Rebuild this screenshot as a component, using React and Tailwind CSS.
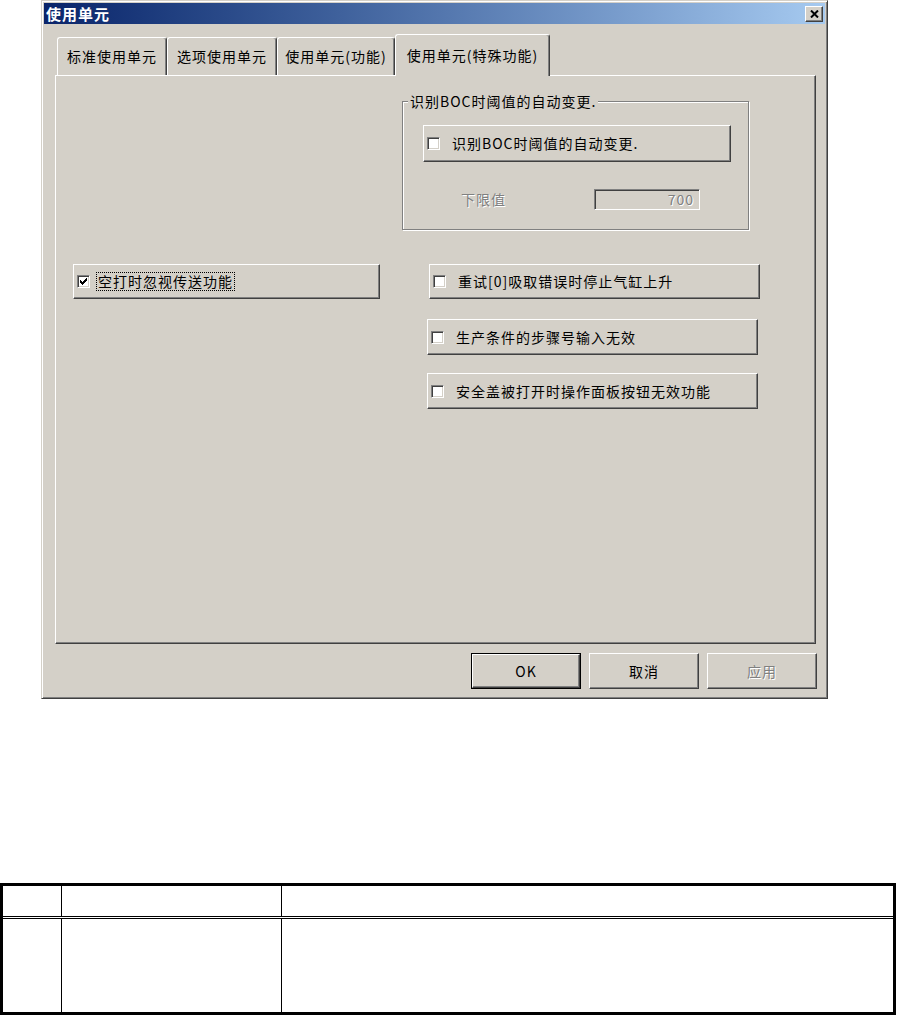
import React from "react";

const raised =
  "border border-t-white border-l-white border-r-[#404040] border-b-[#404040] shadow-[inset_-1px_-1px_0_#808080]";
const sunken =
  "border border-t-[#808080] border-l-[#808080] border-r-white border-b-white shadow-[inset_1px_1px_0_#404040,inset_-1px_-1px_0_#d4d0c8]";
const etched = "border border-[#808080] shadow-[inset_1px_1px_0_#fff,1px_1px_0_#fff]";
const disabledText = "text-[#808080] [text-shadow:1px_1px_0_#fff]";

function Check({ checked }) {
  return (
    <span className={`w-[13px] h-[13px] shrink-0 bg-white flex items-center justify-center ${sunken}`}>
      {checked && (
        <svg width="7" height="7" viewBox="0 0 7 7" shapeRendering="crispEdges">
          <path d="M6 0h1v3h-1v1h-1v1h-1v1h-1v1h-1v-1h-1v-1h-1v-3h1v1h1v1h1v-1h1v-1h1v-1h1z" fill="#000" />
        </svg>
      )}
    </span>
  );
}

function CheckButton({ label, checked, focus, gap = "ml-[12px]", className = "" }) {
  return (
    <div className={`flex items-center pl-[3px] bg-[#d4d0c8] ${raised} ${className}`}>
      <Check checked={checked} />
      <span
        className={`${gap} leading-[17px] whitespace-nowrap ${
          focus ? "outline outline-1 outline-dotted outline-black px-[1px] -ml-[1px]" : ""
        }`}
      >
        {label}
      </span>
    </div>
  );
}

function Tab({ label, selected, className = "" }) {
  return (
    <div
      className={`flex items-center justify-center bg-[#d4d0c8] rounded-t-[3px] border-t border-l border-r border-t-white border-l-white border-r-[#404040] shadow-[inset_-1px_0_0_#808080] ${
        selected ? "h-[42px] -mb-[1px] relative z-10" : "h-[38px]"
      } ${className}`}
    >
      {label}
    </div>
  );
}

function DlgButton({ label, primary, disabled }) {
  const inner = (
    <div className={`w-full h-full flex items-center justify-center ${raised} ${disabled ? disabledText : ""}`}>
      {label}
    </div>
  );
  if (primary) {
    return <div className="w-[110px] h-[36px] border border-black">{inner}</div>;
  }
  return <div className="w-[110px] h-[36px]">{inner}</div>;
}

export default function App() {
  return (
    <div
      className="min-h-screen bg-white text-black text-[14px] tracking-[1px]"
      style={{ fontFamily: '"Noto Sans CJK SC", "Liberation Sans", sans-serif' }}
    >
      {/* dialog window */}
      <div className="ml-[41px] w-[787px] h-[699px] bg-[#d4d0c8] p-[2px] flex flex-col border border-t-[#d4d0c8] border-l-[#d4d0c8] border-r-[#404040] border-b-[#404040] shadow-[inset_1px_1px_0_#fff,inset_-1px_-1px_0_#808080]">
        <div className="h-[21px] shrink-0 flex items-center justify-between pl-[2px] pr-[2px] bg-gradient-to-r from-[#0a246a] to-[#a6caf0]">
          <span className="text-white font-bold text-[15px] tracking-[1px] leading-[21px]">使用单元</span>
          <div className={`w-[18px] h-[16px] flex items-center justify-center bg-[#d4d0c8] ${raised}`}>
            <svg width="9" height="8" viewBox="0 0 9 8">
              <path d="M1 0.5L8 7.5M8 0.5L1 7.5" stroke="#000" strokeWidth="2" />
            </svg>
          </div>
        </div>

        {/* tabs */}
        <div className="h-[51px] shrink-0 flex items-end pl-[13px]">
          <Tab label="标准使用单元" className="w-[110px]" />
          <Tab label="选项使用单元" className="w-[110px]" />
          <Tab label="使用单元(功能)" className="w-[118px]" />
          <Tab label="使用单元(特殊功能)" selected className="w-[155px]" />
        </div>

        {/* tab panel */}
        <div className="ml-[11px] mr-[9px] h-[569px] shrink-0 flex flex-col border border-t-white border-l-white border-r-[#404040] border-b-[#404040] shadow-[inset_-1px_-1px_0_#808080]">
          <div className={`relative ml-[346px] mt-[25px] w-[347px] h-[129px] ${etched}`}>
            <span className="absolute -top-[10px] left-[5px] px-[2px] bg-[#d4d0c8] leading-[18px]">
              识别BOC时阈值的自动变更.
            </span>
            <CheckButton label="识别BOC时阈值的自动变更." className="mt-[23px] ml-[20px] w-[308px] h-[37px]" />
            <div className="flex items-center mt-[27px] h-[21px]">
              <span className={`ml-[58px] ${disabledText}`}>下限值</span>
              <div className={`ml-auto mr-[48px] w-[106px] h-[21px] flex items-center justify-end pr-[5px] ${sunken} ${disabledText}`}>
                700
              </div>
            </div>
          </div>

          <div className="flex mt-[34px]">
            <CheckButton label="空打时忽视传送功能" checked focus gap="ml-[7px]" className="ml-[17px] w-[307px] h-[35px]" />
            <CheckButton label=" 重试[0]吸取错误时停止气缸上升" className="ml-[49px] w-[331px] h-[35px]" />
          </div>
          <CheckButton label="生产条件的步骤号输入无效" className="ml-[371px] mt-[20px] w-[331px] h-[36px]" />
          <CheckButton label="安全盖被打开时操作面板按钮无效功能" className="ml-[371px] mt-[18px] w-[331px] h-[36px]" />
        </div>

        {/* dialog buttons */}
        <div className="flex justify-end gap-[8px] mt-[9px] mr-[8px]">
          <DlgButton label="OK" primary />
          <DlgButton label="取消" />
          <DlgButton label="应用" disabled />
        </div>
      </div>

      {/* table below */}
      <div className="mt-[184px] w-[896px] border-[3px] border-black">
        <div className="grid grid-cols-[58px_220px_1fr] h-[33px] border-b-[3px] border-double border-black">
          <div />
          <div className="border-l border-black" />
          <div className="border-l border-black" />
        </div>
        <div className="grid grid-cols-[58px_220px_1fr] h-[93px]">
          <div />
          <div className="border-l border-black" />
          <div className="border-l border-black" />
        </div>
      </div>
    </div>
  );
}
